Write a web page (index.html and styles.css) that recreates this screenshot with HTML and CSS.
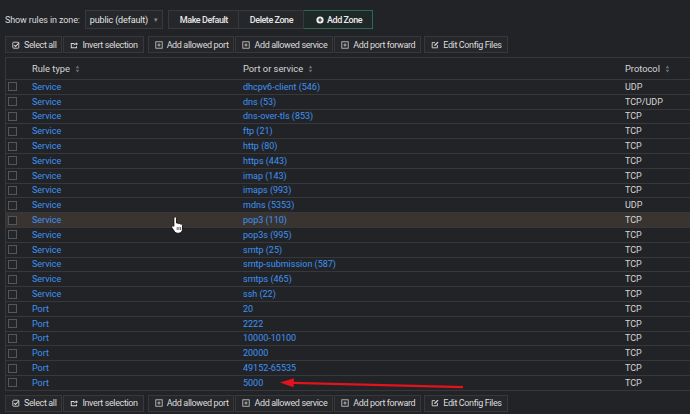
FILE: index.html
```html
<!DOCTYPE html>
<html>
<head>
<meta charset="utf-8">
<link rel="stylesheet" href="styles.css">
</head>
<body>
<div class="page">
  <div class="topbar">
    <span class="label">Show rules in zone:</span>
    <div class="select"><span>public (default)</span><span class="caret">&#9662;</span></div>
    <div class="group">
      <button class="btn big">Make Default</button>
      <button class="btn big">Delete Zone</button>
      <button class="btn big primary"><svg class="ic" viewBox="0 0 10 10"><circle cx="5" cy="5" r="4.5" fill="#f0f0f0"/><path d="M5 2.6v4.8M2.6 5h4.8" stroke="#1f2a28" stroke-width="1.4"/></svg>Add Zone</button>
    </div>
  </div>

  <div class="toolbar">
    <div class="group">
      <button class="btn"><svg class="ic" viewBox="0 0 10 10"><rect x="1" y="1.5" width="7.5" height="7.5" rx="1" fill="none" stroke="#d8d8d8" stroke-width="1.1"/><path d="M2.8 5.2l1.6 1.6 4.4-4.6" fill="none" stroke="#d8d8d8" stroke-width="1.3"/></svg>Select all</button>
      <button class="btn"><svg class="ic" viewBox="0 0 10 10"><path d="M1 2.5h4.5v1.2H2.2v4.1h5.3V6.5h1.2v2.5H1z" fill="#d8d8d8"/><path d="M4.3 6.2c0-2.2 1.6-3.3 3.4-3.3V1.5l2.2 2.1-2.2 2.1V4.3c-1.4 0-2.6.5-3.4 1.9z" fill="#d8d8d8"/></svg>Invert selection</button>
    </div>
    <div class="group g2">
      <button class="btn"><svg class="ic" viewBox="0 0 10 10"><rect x="1" y="1" width="8" height="8" fill="none" stroke="#d0d0d0" stroke-width="1"/><path d="M5 3v4M3 5h4" stroke="#d0d0d0" stroke-width="1"/></svg>Add allowed port</button>
      <button class="btn"><svg class="ic" viewBox="0 0 10 10"><rect x="1" y="1" width="8" height="8" fill="none" stroke="#d0d0d0" stroke-width="1"/><path d="M5 3v4M3 5h4" stroke="#d0d0d0" stroke-width="1"/></svg>Add allowed service</button>
      <button class="btn"><svg class="ic" viewBox="0 0 10 10"><rect x="1" y="1" width="8" height="8" fill="none" stroke="#d0d0d0" stroke-width="1"/><path d="M5 3v4M3 5h4" stroke="#d0d0d0" stroke-width="1"/></svg>Add port forward</button>
    </div>
    <div class="group g3">
      <button class="btn"><svg class="ic" viewBox="0 0 10 10"><path d="M5 2H1.5v6.5H8V5" fill="none" stroke="#d8d8d8" stroke-width="1.1"/><path d="M4 6.2l.3-1.5L8.2.8l1.2 1.2-3.9 3.9z" fill="#d8d8d8"/></svg>Edit Config Files</button>
    </div>
  </div>

  <div class="table">
    <div class="row head">
      <div></div>
      <div>Rule type<svg class="sort" viewBox="0 0 5 9"><path d="M2.5 0.5L4.6 3.6H0.4zM2.5 8.5L4.6 5.4H0.4z" fill="#6c6d71"/></svg></div>
      <div>Port or service<svg class="sort" viewBox="0 0 5 9"><path d="M2.5 0.5L4.6 3.6H0.4zM2.5 8.5L4.6 5.4H0.4z" fill="#6c6d71"/></svg></div>
      <div class="proto">Protocol<svg class="sort" viewBox="0 0 5 9"><path d="M2.5 0.5L4.6 3.6H0.4zM2.5 8.5L4.6 5.4H0.4z" fill="#6c6d71"/></svg></div>
    </div>
    <div class="row"><div><span class="cb"></span></div><div><a>Service</a></div><div><a>dhcpv6-client (546)</a></div><div class="proto">UDP</div></div>
    <div class="row"><div><span class="cb"></span></div><div><a>Service</a></div><div><a>dns (53)</a></div><div class="proto">TCP/UDP</div></div>
    <div class="row"><div><span class="cb"></span></div><div><a>Service</a></div><div><a>dns-over-tls (853)</a></div><div class="proto">TCP</div></div>
    <div class="row"><div><span class="cb"></span></div><div><a>Service</a></div><div><a>ftp (21)</a></div><div class="proto">TCP</div></div>
    <div class="row"><div><span class="cb"></span></div><div><a>Service</a></div><div><a>http (80)</a></div><div class="proto">TCP</div></div>
    <div class="row"><div><span class="cb"></span></div><div><a>Service</a></div><div><a>https (443)</a></div><div class="proto">TCP</div></div>
    <div class="row"><div><span class="cb"></span></div><div><a>Service</a></div><div><a>imap (143)</a></div><div class="proto">TCP</div></div>
    <div class="row"><div><span class="cb"></span></div><div><a>Service</a></div><div><a>imaps (993)</a></div><div class="proto">TCP</div></div>
    <div class="row"><div><span class="cb"></span></div><div><a>Service</a></div><div><a>mdns (5353)</a></div><div class="proto">UDP</div></div>
    <div class="row hover"><div><span class="cb"></span></div><div><a>Service</a></div><div><a>pop3 (110)</a></div><div class="proto">TCP</div></div>
    <div class="row"><div><span class="cb"></span></div><div><a>Service</a></div><div><a>pop3s (995)</a></div><div class="proto">TCP</div></div>
    <div class="row"><div><span class="cb"></span></div><div><a>Service</a></div><div><a>smtp (25)</a></div><div class="proto">TCP</div></div>
    <div class="row"><div><span class="cb"></span></div><div><a>Service</a></div><div><a>smtp-submission (587)</a></div><div class="proto">TCP</div></div>
    <div class="row"><div><span class="cb"></span></div><div><a>Service</a></div><div><a>smtps (465)</a></div><div class="proto">TCP</div></div>
    <div class="row"><div><span class="cb"></span></div><div><a>Service</a></div><div><a>ssh (22)</a></div><div class="proto">TCP</div></div>
    <div class="row"><div><span class="cb"></span></div><div><a>Port</a></div><div><a>20</a></div><div class="proto">TCP</div></div>
    <div class="row"><div><span class="cb"></span></div><div><a>Port</a></div><div><a>2222</a></div><div class="proto">TCP</div></div>
    <div class="row"><div><span class="cb"></span></div><div><a>Port</a></div><div><a>10000-10100</a></div><div class="proto">TCP</div></div>
    <div class="row"><div><span class="cb"></span></div><div><a>Port</a></div><div><a>20000</a></div><div class="proto">TCP</div></div>
    <div class="row"><div><span class="cb"></span></div><div><a>Port</a></div><div><a>49152-65535</a></div><div class="proto">TCP</div></div>
    <div class="row"><div><span class="cb"></span></div><div><a>Port</a></div><div><a>5000</a></div><div class="proto">TCP</div></div>
  </div>

  <div class="toolbar bottom">
    <div class="group">
      <button class="btn"><svg class="ic" viewBox="0 0 10 10"><rect x="1" y="1.5" width="7.5" height="7.5" rx="1" fill="none" stroke="#d8d8d8" stroke-width="1.1"/><path d="M2.8 5.2l1.6 1.6 4.4-4.6" fill="none" stroke="#d8d8d8" stroke-width="1.3"/></svg>Select all</button>
      <button class="btn"><svg class="ic" viewBox="0 0 10 10"><path d="M1 2.5h4.5v1.2H2.2v4.1h5.3V6.5h1.2v2.5H1z" fill="#d8d8d8"/><path d="M4.3 6.2c0-2.2 1.6-3.3 3.4-3.3V1.5l2.2 2.1-2.2 2.1V4.3c-1.4 0-2.6.5-3.4 1.9z" fill="#d8d8d8"/></svg>Invert selection</button>
    </div>
    <div class="group g2">
      <button class="btn"><svg class="ic" viewBox="0 0 10 10"><rect x="1" y="1" width="8" height="8" fill="none" stroke="#d0d0d0" stroke-width="1"/><path d="M5 3v4M3 5h4" stroke="#d0d0d0" stroke-width="1"/></svg>Add allowed port</button>
      <button class="btn"><svg class="ic" viewBox="0 0 10 10"><rect x="1" y="1" width="8" height="8" fill="none" stroke="#d0d0d0" stroke-width="1"/><path d="M5 3v4M3 5h4" stroke="#d0d0d0" stroke-width="1"/></svg>Add allowed service</button>
      <button class="btn"><svg class="ic" viewBox="0 0 10 10"><rect x="1" y="1" width="8" height="8" fill="none" stroke="#d0d0d0" stroke-width="1"/><path d="M5 3v4M3 5h4" stroke="#d0d0d0" stroke-width="1"/></svg>Add port forward</button>
    </div>
    <div class="group g3">
      <button class="btn"><svg class="ic" viewBox="0 0 10 10"><path d="M5 2H1.5v6.5H8V5" fill="none" stroke="#d8d8d8" stroke-width="1.1"/><path d="M4 6.2l.3-1.5L8.2.8l1.2 1.2-3.9 3.9z" fill="#d8d8d8"/></svg>Edit Config Files</button>
    </div>
  </div>

  <svg class="cursor" viewBox="0 0 12.5 18" width="12.5" height="18"><path d="M4.2 0.8C5 0.8 5.5 1.4 5.5 2.2V7L6 6.9C6.7 6.9 7.2 7.2 7.4 7.7C7.8 7.3 8.6 7.2 9.1 7.6C9.3 7.8 9.4 8 9.5 8.2C10 7.9 10.8 8 11.2 8.6C11.4 8.9 11.5 9.2 11.5 9.6V13C11.5 15.3 10 17.2 7.6 17.2H6.3C5.2 17.2 4.3 16.6 3.7 15.8L0.9 11.8C0.5 11.2 0.6 10.5 1.2 10.1C1.7 9.7 2.5 9.8 2.9 10.3V2.2C2.9 1.4 3.4 0.8 4.2 0.8Z" fill="#fff" stroke="#000" stroke-width="0.8"/><path d="M6.2 11v3M7.9 11v3M9.6 11v3" stroke="#000" stroke-width="0.6"/></svg>
  <svg class="arrow" viewBox="0 0 190 14" width="190" height="14"><path d="M14 5.8L184 10.2" stroke="#e3121c" stroke-width="2.2"/><path d="M1 5.5L15 1.2 14.6 10.2z" fill="#e3121c"/></svg>
</div>
</body>
</html>
```

FILE: styles.css
```css
html, body {
  margin: 0;
  padding: 0;
  background: #222327;
  overflow: hidden;
}
body {
  font-family: Roboto, "Liberation Sans", sans-serif;
  font-size: 9px;
  color: #e2e2e2;
}
.page {
  position: relative;
  width: 690px;
  height: 414px;
}
.topbar {
  display: flex;
  align-items: center;
  padding: 10px 0 0 5px;
  height: 19px;
}
.label {
  font-size: 9px;
  letter-spacing: -0.12px;
  color: #dcdcdc;
  margin-right: 5px;
}
.select {
  box-sizing: border-box;
  width: 78px;
  height: 19px;
  display: flex;
  align-items: center;
  justify-content: space-between;
  padding: 0 4px 0 4px;
  background: #26272b;
  border: 1px solid #38393d;
  color: #e4e4e4;
  font-size: 9px;
  letter-spacing: -0.15px;
  margin-right: 5px;
}
.caret {
  color: #8a8a8a;
  font-size: 7px;
}
.group {
  display: flex;
}
.btn {
  box-sizing: border-box;
  display: flex;
  align-items: center;
  gap: 4px;
  height: 17px;
  padding: 0 5px 0 6px;
  margin: 0;
  background: #26272b;
  border: 1px solid #37383c;
  color: #dcdcdc;
  font-family: inherit;
  font-size: 9px;
  letter-spacing: -0.38px;
  white-space: nowrap;
}
.btn + .btn {
  margin-left: 1px;
}
.btn.big {
  height: 19px;
  padding: 0 10px 0 11px;
  font-weight: 500;
  font-size: 9px;
  letter-spacing: -0.45px;
  color: #e6e6e6;
}
.btn.big + .btn.big {
  margin-left: 0;
  border-left: 0;
}
.btn.primary {
  background: #1e2826;
  border: 1px solid #2a6a55;
  color: #ececec;
  padding: 0 10px 0 12px;
  gap: 3px;
}
.ic {
  width: 8px;
  height: 8px;
  flex: none;
}
.toolbar {
  display: flex;
  padding: 7px 0 0 5px;
  height: 17px;
}
.toolbar .g2 {
  margin-left: 4px;
}
.toolbar .g3 {
  margin-left: 3px;
}
.toolbar.bottom {
  padding-top: 4px;
}
.table {
  margin: 4px 0 0 5px;
  border-top: 1px solid #37383c;
  border-left: 1px solid #37383c;
}
.row {
  display: grid;
  grid-template-columns: 26px 211px 382px 1fr;
  align-items: center;
  box-sizing: border-box;
  height: 14.8px;
  border-bottom: 1px solid #37383c;
}
.row.head {
  height: 22px;
  font-size: 9.3px;
  color: #d6d6d6;
}
.row.hover {
  background: #3a3431;
}
.row > div {
  display: flex;
  align-items: center;
  white-space: nowrap;
  line-height: 12px;
}
.cb {
  display: block;
  box-sizing: border-box;
  width: 9px;
  height: 9px;
  margin-left: 2px;
  border: 1px solid #55565a;
  background: #242529;
}
a {
  color: #3f93f2;
}
.proto {
  color: #d6d6d6;
}
.sort {
  width: 5px;
  height: 8px;
  margin-left: 5px;
}
.cursor {
  position: absolute;
  left: 171px;
  top: 216px;
}
.arrow {
  position: absolute;
  left: 279px;
  top: 377px;
}
```
